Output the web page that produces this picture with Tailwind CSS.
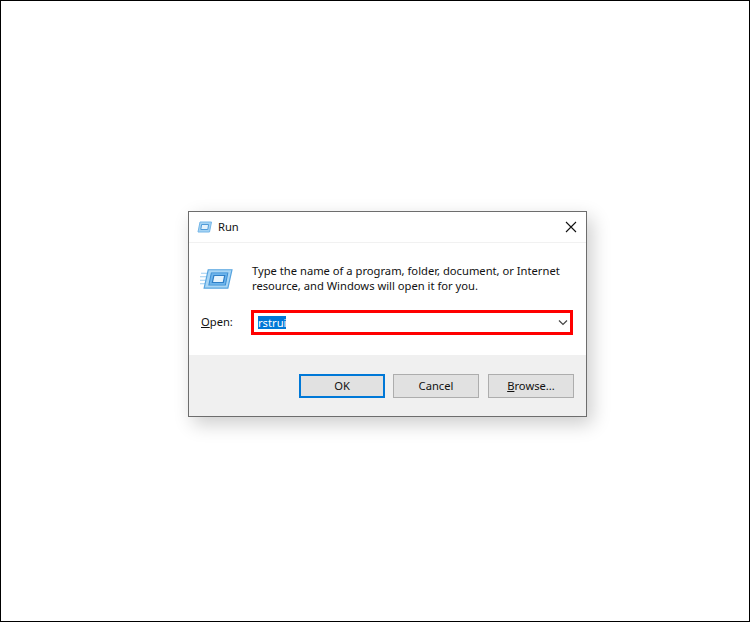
<!DOCTYPE html>
<html lang="en">
    <head>
        <meta charset="UTF-8" />
        <title>Run</title>
        <script src="https://cdn.jsdelivr.net/npm/@tailwindcss/browser@4"></script>
    </head>
    <body class="bg-white font-['Noto_Sans',sans-serif] text-[11.2px] text-black">
        <div class="h-[622px] w-[750px] overflow-hidden border border-black pl-[187px] pt-[210px]">
            <!-- Run dialog -->
            <div class="flex h-[206px] w-[399px] flex-col border border-[#6d6d6d] bg-white shadow-[5px_7px_18px_rgba(0,0,0,0.2)]">
                <div class="flex h-[31px] items-center justify-between border-b border-[#f1f1f1] pl-[8px] pr-[9px]">
                    <div class="flex items-center gap-[6px]">
                        <svg width="15" height="12" viewBox="0 0 15 12">
                            <path d="M3 1H14.5L12.5 11H1Z" fill="#a5d3f3" stroke="#74b6e8" stroke-width="1" />
                            <path d="M4.6 3.5H11.6L10.8 8.5H3.8Z" fill="#e3f2fc" stroke="#4f9bd9" stroke-width="1" />
                        </svg>
                        <span class="leading-none text-[#111]">Run</span>
                    </div>
                    <svg width="12" height="12" viewBox="0 0 12 12">
                        <path d="M1 1L11 11M11 1L1 11" stroke="#111" stroke-width="1.1" fill="none" />
                    </svg>
                </div>
                <div class="flex flex-1 flex-col bg-white">
                    <div class="flex h-[57px] pl-[11px] pt-[20px]">
                        <svg width="33" height="21" viewBox="0 0 32 24" preserveAspectRatio="none" class="mt-[5px] shrink-0">
                            <path d="M1 6H9M0 10H7M0 14H6M0 18H5" stroke="#9ccdf1" stroke-width="1" fill="none" />
                            <path d="M8 2H31L27 23H4Z" fill="#a9d6f5" stroke="#58a5e0" stroke-width="1.2" />
                            <path d="M11 5.5H27L24.6 19.5H8.6Z" fill="#6db5ec" stroke="#3d8fd4" stroke-width="1" />
                            <path d="M13.5 8.5H24L22.6 16.5H12Z" fill="#e6f4fd" stroke="#2f7fc6" stroke-width="1.2" />
                        </svg>
                        <p class="ml-[19px] whitespace-nowrap leading-[15px] text-[#111]">Type the name of a program, folder, document, or Internet<br />resource, and Windows will open it for you.</p>
                    </div>
                    <div class="mt-[10px] flex h-[25px] items-center pl-[12px]">
                        <span class="w-[50px] text-[#111]"><span class="underline">O</span>pen:</span>
                        <div class="flex h-[25px] w-[322px] items-center justify-between border-[3px] border-[#ff0000] bg-white pl-[4px] pr-[2px]">
                            <span class="bg-[#0078d7] leading-[13px] text-white">rstrui</span>
                            <svg width="10" height="6" viewBox="0 0 10 6">
                                <path d="M1 0.5L5 4.5L9 0.5" stroke="#444" stroke-width="1.2" fill="none" />
                            </svg>
                        </div>
                    </div>
                </div>
                <div class="flex h-[61px] items-start gap-[8px] bg-[#f0f0f0] pl-[110px] pt-[19px]">
                    <button class="h-[24px] w-[86px] border-2 border-[#0078d7] bg-[#e1e1e1] leading-none text-[#111]">OK</button>
                    <button class="h-[24px] w-[86px] border border-[#adadad] bg-[#e1e1e1] leading-none text-[#111]">Cancel</button>
                    <button class="ml-[1px] h-[24px] w-[86px] border border-[#adadad] bg-[#e1e1e1] leading-none text-[#111]"><span class="underline">B</span>rowse...</button>
                </div>
            </div>
        </div>
    </body>
</html>
